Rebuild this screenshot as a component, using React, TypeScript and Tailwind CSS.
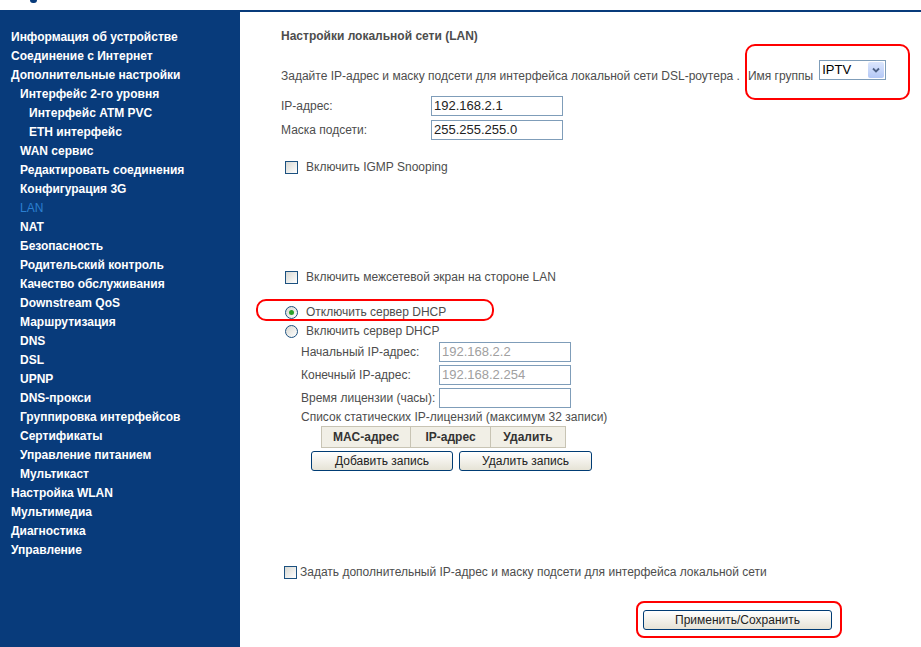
import React from "react";

const menu: [number, string][] = [
  [0, "Информация об устройстве"],
  [0, "Соединение с Интернет"],
  [0, "Дополнительные настройки"],
  [1, "Интерфейс 2-го уровня"],
  [2, "Интерфейс ATM PVC"],
  [2, "ETH интерфейс"],
  [1, "WAN сервис"],
  [1, "Редактировать соединения"],
  [1, "Конфигурация 3G"],
  [1, "LAN"],
  [1, "NAT"],
  [1, "Безопасность"],
  [1, "Родительский контроль"],
  [1, "Качество обслуживания"],
  [1, "Downstream QoS"],
  [1, "Маршрутизация"],
  [1, "DNS"],
  [1, "DSL"],
  [1, "UPNP"],
  [1, "DNS-прокси"],
  [1, "Группировка интерфейсов"],
  [1, "Сертификаты"],
  [1, "Управление питанием"],
  [1, "Мультикаст"],
  [0, "Настройка WLAN"],
  [0, "Мультимедиа"],
  [0, "Диагностика"],
  [0, "Управление"],
];

function Checkbox() {
  return (
    <span className="inline-block w-[13px] h-[13px] border border-[#1c5180] bg-gradient-to-br from-[#d8d8d2] to-white shrink-0" />
  );
}

function Radio({ checked }: { checked?: boolean }) {
  return (
    <span className="inline-flex items-center justify-center w-[13px] h-[13px] rounded-full border border-[#1c5180] bg-gradient-to-br from-[#d8d8d2] to-white shrink-0">
      {checked && <span className="w-[5px] h-[5px] rounded-full bg-[#2ba12b]" />}
    </span>
  );
}

function Input({ value, disabled }: { value: string; disabled?: boolean }) {
  return (
    <div
      className={
        "w-[132px] h-[20px] border border-[#7f9db9] bg-white px-[2px] text-[13px] leading-[18px] " +
        (disabled ? "text-[#a0a0a0]" : "text-[#222]")
      }
    >
      {value}
    </div>
  );
}

function XpButton({ w, children }: { w: string; children: React.ReactNode }) {
  return (
    <div
      className={
        w +
        " h-[20px] rounded-[3px] border border-[#003c74] bg-gradient-to-b from-white to-[#e6e3d6] text-[12px] leading-[18px] text-[#222] text-center"
      }
    >
      {children}
    </div>
  );
}

export default function App() {
  return (
    <div className="h-screen flex flex-col bg-white" style={{ fontFamily: '"Liberation Sans", Arial, sans-serif' }}>
      <div className="h-[10px] shrink-0">
        <div className="ml-[30px] w-[7px] h-[3px] rounded-b-full bg-[#083b7b]" />
      </div>
      <div className="flex flex-1">
        <nav className="w-[240px] shrink-0 bg-[#083b7b] pt-[18px]">
          {menu.map(([lvl, label]) => (
            <div
              key={label}
              className={
                "h-[19px] text-[12px] leading-[19px] " +
                (lvl === 0 ? "pl-[11px] " : lvl === 1 ? "pl-[20px] " : "pl-[29px] ") +
                (label === "LAN" ? "text-[#2b7fd0] font-normal" : "text-white font-bold")
              }
            >
              {label}
            </div>
          ))}
        </nav>
        <main className="relative flex-1 border-t-2 border-[#083b7b] pl-[41px] pt-[16px] text-[12px] text-[#4d4d4d]">
          <div className="h-[16px] leading-[16px] font-bold">Настройки локальной сети (LAN)</div>

          <div className="mt-[16px] flex items-end">
            <span className="leading-[14px] mb-[-3px]">
              Задайте IP-адрес и маску подсети для интерфейса локальной сети DSL-роутера .
            </span>
            <span className="ml-[8px] leading-[14px] mb-[-3px]">Имя группы</span>
            <div className="ml-[6px] w-[67px] h-[20px] border border-[#7f9db9] bg-white flex items-center justify-between">
              <span className="pl-[2px] text-[13px] text-black leading-[18px]">IPTV</span>
              <span className="mr-[1px] w-[16px] h-[16px] rounded-[2px] bg-gradient-to-b from-[#dbe6fd] to-[#b4c8f6] flex items-center justify-center">
                <svg width="8" height="6" viewBox="0 0 8 6">
                  <path d="M1 1.5 L4 4.5 L7 1.5" stroke="#4d6185" strokeWidth="1.8" fill="none" />
                </svg>
              </span>
            </div>
          </div>

          <div className="mt-[16px] flex items-center">
            <span className="w-[150px]">IP-адрес:</span>
            <Input value="192.168.2.1" />
          </div>
          <div className="mt-[4px] flex items-center">
            <span className="w-[150px]">Маска подсети:</span>
            <Input value="255.255.255.0" />
          </div>

          <div className="mt-[20px] h-[14px] flex items-center pl-[4px] gap-[8px]">
            <Checkbox />
            <span>Включить IGMP Snooping</span>
          </div>

          <div className="mt-[96px] h-[14px] flex items-center pl-[4px] gap-[8px]">
            <Checkbox />
            <span>Включить межсетевой экран на стороне LAN</span>
          </div>

          <div className="mt-[21px] h-[14px] flex items-center pl-[4px] gap-[8px]">
            <Radio checked />
            <span>Отключить сервер DHCP</span>
          </div>
          <div className="mt-[5px] h-[14px] flex items-center pl-[4px] gap-[8px]">
            <Radio />
            <span>Включить сервер DHCP</span>
          </div>

          <div className="pl-[20px]">
            <div className="mt-[4px] flex items-center">
              <span className="w-[138px]">Начальный IP-адрес:</span>
              <Input value="192.168.2.2" disabled />
            </div>
            <div className="mt-[3px] flex items-center">
              <span className="w-[138px]">Конечный IP-адрес:</span>
              <Input value="192.168.2.254" disabled />
            </div>
            <div className="mt-[3px] flex items-center">
              <span className="w-[138px]">Время лицензии (часы):</span>
              <Input value="" />
            </div>
            <div className="mt-[2px] h-[14px] leading-[14px]">Список статических IP-лицензий (максимум 32 записи)</div>
          </div>

          <div className="mt-[2px] ml-[40px] flex h-[22px] w-fit border border-[#c8c4b4] bg-[#f1efe6] font-bold text-[#333]">
            <div className="w-[89px] border-r border-[#c8c4b4] flex items-center justify-center">MAC-адрес</div>
            <div className="w-[80px] border-r border-[#c8c4b4] flex items-center justify-center">IP-адрес</div>
            <div className="w-[74px] flex items-center justify-center">Удалить</div>
          </div>

          <div className="mt-[3px] ml-[30px] flex gap-[6px]">
            <XpButton w="w-[142px]">Добавить запись</XpButton>
            <XpButton w="w-[133px]">Удалить запись</XpButton>
          </div>

          <div className="mt-[94px] h-[14px] flex items-center pl-[3px] gap-[3px]">
            <Checkbox />
            <span>Задать дополнительный IP-адрес и маску подсети для интерфейса локальной сети</span>
          </div>

          <div className="mt-[31px] ml-[362px]">
            <XpButton w="w-[189px]">Применить/Сохранить</XpButton>
          </div>

          <div className="absolute left-[505px] top-[32px] w-[165px] h-[56px] border-2 border-[#ff0000] rounded-[10px]" />
          <div className="absolute left-[16px] top-[287px] w-[238px] h-[22px] border-2 border-[#ff0000] rounded-[10px]" />
          <div className="absolute left-[396px] top-[589px] w-[206px] h-[37px] border-2 border-[#ff0000] rounded-[8px]" />
        </main>
      </div>
    </div>
  );
}
